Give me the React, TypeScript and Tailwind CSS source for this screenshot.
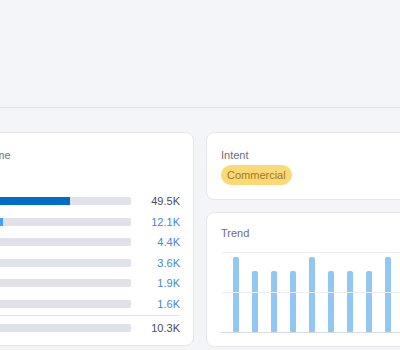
import React from 'react'

const rows = [
  { code: 'US', fill: 83, color: 'bg-[#006dca]', value: '49.5K', link: false },
  { code: 'IN', fill: 16, color: 'bg-[#3ea2f5]', value: '12.1K', link: true },
  { code: 'GB', fill: 10, color: 'bg-[#7cc0f7]', value: '4.4K', link: true },
  { code: 'CA', fill: 8, color: 'bg-[#7cc0f7]', value: '3.6K', link: true },
  { code: 'AU', fill: 5, color: 'bg-[#a9d6fa]', value: '1.9K', link: true },
  { code: 'DE', fill: 4, color: 'bg-[#a9d6fa]', value: '1.6K', link: true },
]

const trend = [1, 0, 0, 0, 1, 0, 0, 0, 1, 0, 0, 0, 1, 0]

// country column sits left of the viewport, so only the bars and values show
function Row({ fill, color, value, link }: { fill: number; color: string; value: string; link: boolean }) {
  return (
    <div className="flex items-center h-[20.5px]">
      <div className="w-[65px]" />
      <div className="flex-1 h-2 rounded-[2px] bg-[#e0e1e9] overflow-hidden">
        <div className={`h-full ${color}`} style={{ width: fill }} />
      </div>
      <div className={`w-[49px] text-right text-[11px] ${link ? 'text-[#3d86de]' : 'text-[#4a4c55]'}`}>{value}</div>
    </div>
  )
}

export default function App() {
  return (
    <div className="w-[400px] h-[350px] overflow-hidden bg-[#f4f5f8]" style={{ fontFamily: '"Liberation Sans", Arial, sans-serif' }}>
      <div className="h-[108px] border-b border-[#e1e2e8] bg-[#f4f5f8]" />
      <div className="flex gap-3 pt-6 -ml-[94px]">
        {/* volume card */}
        <div className="w-[288px] shrink-0 h-[214px] bg-white rounded-lg border border-[#e6e7ed] pl-[15px] pr-[13px] pt-[15px]">
          <div className="pl-[17px] text-[11px] leading-[14px] text-[#6c6e79]">Global Volume</div>
          <div className="mt-[29px]">
            {rows.map(r => <Row key={r.code} {...r} />)}
          </div>
          <div className="border-t border-[#e0e1e9] mt-[1px]" />
          <div className="mt-[2px]">
            <Row fill={0} color="bg-[#a9d6fa]" value="10.3K" link={false} />
          </div>
        </div>

        {/* right column */}
        <div className="w-[288px] shrink-0 flex flex-col gap-3">
          <div className="h-[68px] bg-white rounded-lg border border-[#e6e7ed] px-[14px] pt-[15px]">
            <div className="text-[11px] leading-[14px] text-[#6c6e79]">Intent</div>
            <div className="mt-[3px] inline-flex items-center h-5 px-[6px] rounded-full bg-[#fcd977] text-[11px] text-[#a0781a]">Commercial</div>
          </div>
          <div className="h-[135px] bg-white rounded-lg border border-[#e6e7ed] px-[14px] pt-[13px]">
            <div className="text-[11px] leading-[14px] text-[#6c6e79]">Trend</div>
            <div className="relative mt-[12px] h-[81px] border-t border-[#eeeff3]">
              <div className="absolute left-0 right-0 top-[39px] border-t border-[#eeeff3]" />
              <div className="absolute left-0 right-0 bottom-0 border-t border-[#d9dae1]" />
              <div className="flex items-end h-[80px] pl-[5px]">
                {trend.map((t, i) => (
                  <div key={i} className="w-[19px] shrink-0 flex justify-center">
                    <div className={`w-[6px] rounded-[2px] bg-[#90c8f3] ${t ? 'h-[76px]' : 'h-[62px]'}`} />
                  </div>
                ))}
              </div>
            </div>
          </div>
        </div>
      </div>
    </div>
  )
}
